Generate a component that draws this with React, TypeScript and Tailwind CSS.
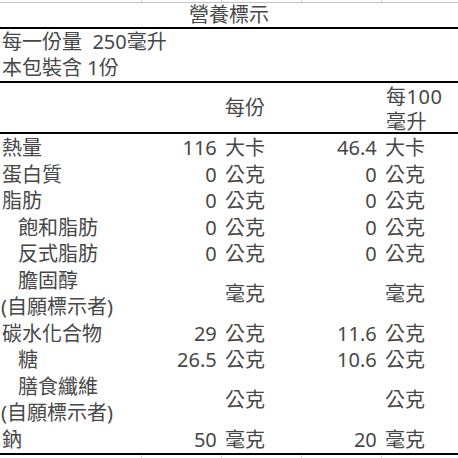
import React from 'react';

type Row = {
  label: string;
  indent?: boolean;
  note?: boolean;
  v1: string;
  v2: string;
};

const rows: Row[] = [
  { label: '熱量', v1: '116 大卡', v2: '46.4 大卡' },
  { label: '蛋白質', v1: '0 公克', v2: '0 公克' },
  { label: '脂肪', v1: '0 公克', v2: '0 公克' },
  { label: '飽和脂肪', indent: true, v1: '0 公克', v2: '0 公克' },
  { label: '反式脂肪', indent: true, v1: '0 公克', v2: '0 公克' },
  { label: '膽固醇', indent: true, note: true, v1: '毫克', v2: '毫克' },
  { label: '碳水化合物', v1: '29 公克', v2: '11.6 公克' },
  { label: '糖', indent: true, v1: '26.5 公克', v2: '10.6 公克' },
  { label: '膳食纖維', indent: true, note: true, v1: '公克', v2: '公克' },
  { label: '鈉', v1: '50 毫克', v2: '20 毫克' },
];

const font = { fontFamily: '"Noto Sans", "Noto Sans CJK TC", sans-serif' };

const GridLines = ({ h }: { h: string }) => (
  <div className={`grid grid-cols-[142px_80px_80px_80px_1fr] ${h}`}>
    <div className="border-r border-[#d0d0d0]" />
    <div className="border-r border-[#d0d0d0]" />
    <div className="border-r border-[#d0d0d0]" />
    <div className="border-r border-[#d0d0d0]" />
    <div />
  </div>
);

export default function App() {
  return (
    <div className="w-[458px] h-[458px] overflow-hidden bg-white text-[20px] text-[#474747]" style={font}>
      <div className="border-b border-[#c4c4c4]">
        <GridLines h="h-[2px]" />
      </div>

      <div className="h-[26px] flex items-center justify-center leading-[26px] border-b-2 border-black">
        營養標示
      </div>

      <div className="pl-[2px] leading-[26px] border-b-2 border-black">
        <div className="whitespace-pre">每一份量  250毫升</div>
        <div>本包裝含 1份</div>
      </div>

      <div className="flex h-[51px] leading-[25px] border-b-2 border-black">
        <div className="w-[170px]" />
        <div className="w-[96px] flex items-center justify-end pr-[1px]">每份</div>
        <div className="ml-[120px] pt-[1px] tracking-[0.5px]">
          每100
          <br />
          毫升
        </div>
      </div>

      <div className="leading-[26.5px] pt-[1px] border-b-2 border-black">
        {rows.map((r, i) => (
          <div key={i} className="grid grid-cols-[170px_96px_160px_1fr] items-center">
            <div>
              <div className={r.indent ? 'pl-[18px]' : 'pl-[2px]'}>{r.label}</div>
              {r.note && <div className="pl-[1px]">(自願標示者)</div>}
            </div>
            <div className="text-right pr-[1px] [word-spacing:3px]">{r.v1}</div>
            <div className="text-right pr-[1px] [word-spacing:3px]">{r.v2}</div>
            <div />
          </div>
        ))}
      </div>

      <GridLines h="h-[10px]" />
    </div>
  );
}
